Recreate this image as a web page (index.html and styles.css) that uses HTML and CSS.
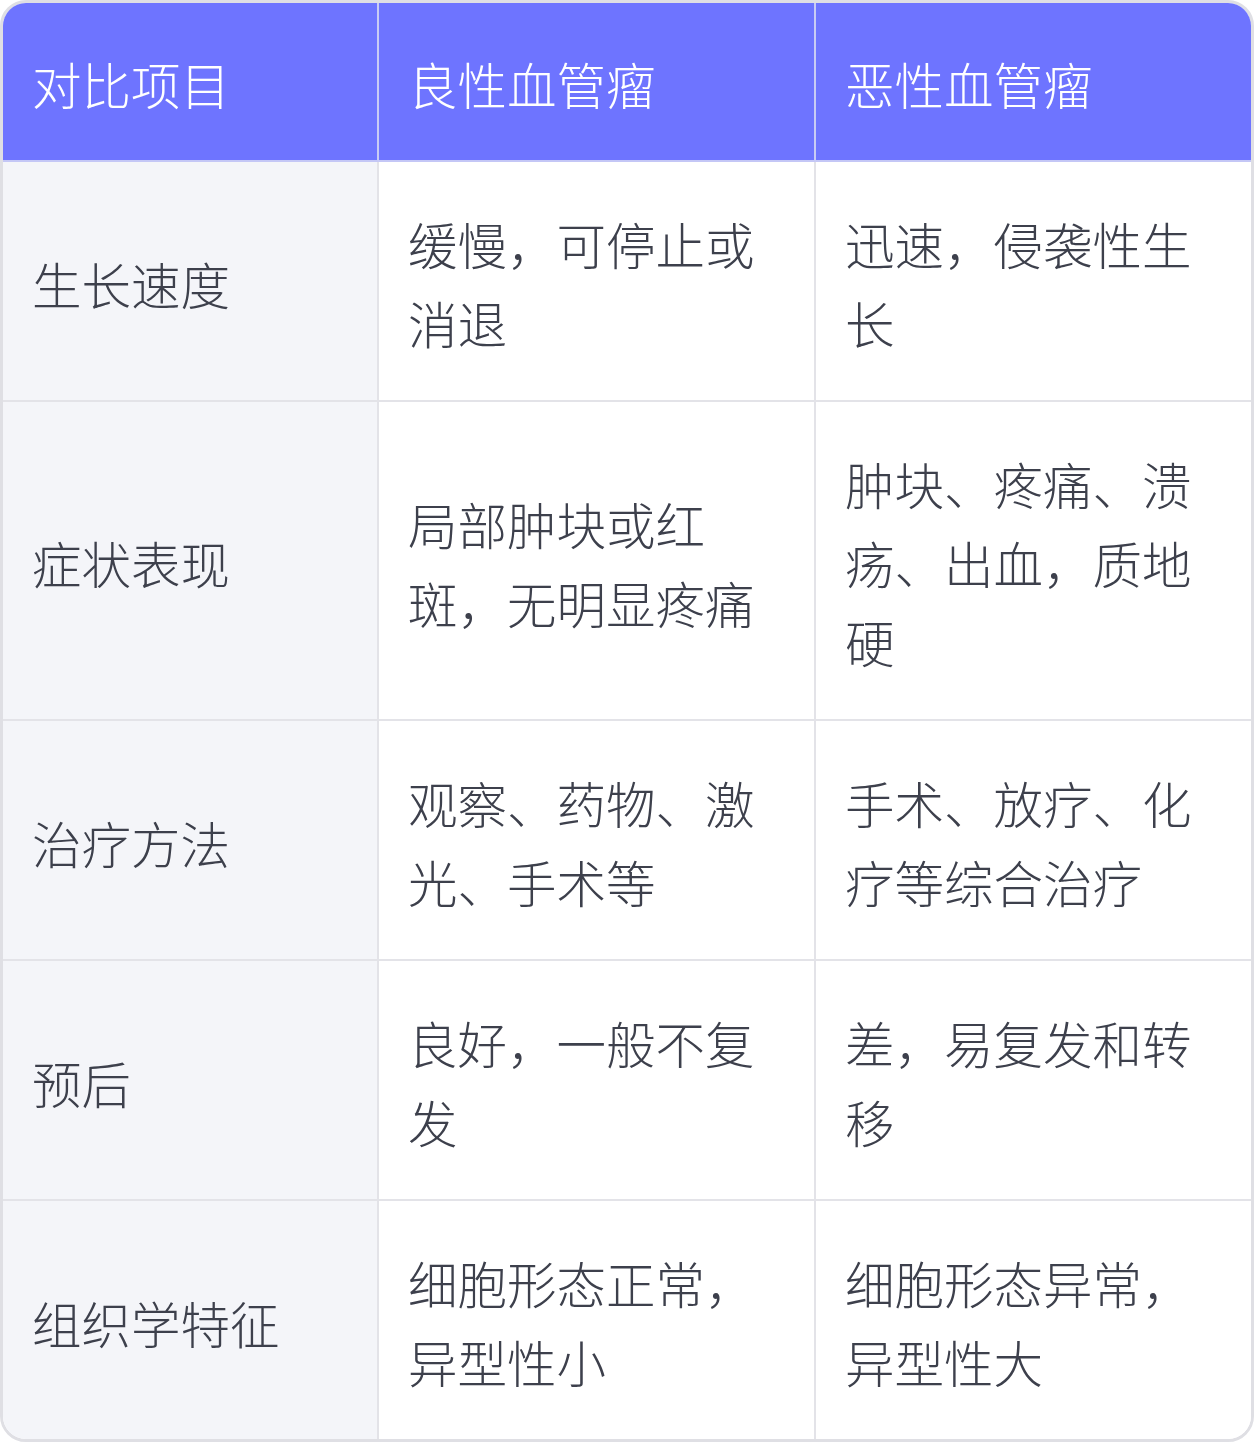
FILE: index.html
```html
<!DOCTYPE html>
<html lang="zh-CN">
<head>
<meta charset="utf-8">
<title>良性血管瘤与恶性血管瘤对比</title>
<link rel="stylesheet" href="styles.css">
</head>
<body>
<div class="card">
  <table class="cmp">
    <colgroup>
      <col class="c1">
      <col class="c2">
      <col class="c3">
    </colgroup>
    <thead>
      <tr>
        <th>对比项目</th>
        <th>良性血管瘤</th>
        <th>恶性血管瘤</th>
      </tr>
    </thead>
    <tbody>
      <tr>
        <td class="label">生长速度</td>
        <td>缓慢，可停止或消退</td>
        <td>迅速，侵袭性生长</td>
      </tr>
      <tr>
        <td class="label">症状表现</td>
        <td>局部肿块或红斑，无明显疼痛</td>
        <td>肿块、疼痛、溃疡、出血，质地硬</td>
      </tr>
      <tr>
        <td class="label">治疗方法</td>
        <td>观察、药物、激光、手术等</td>
        <td>手术、放疗、化疗等综合治疗</td>
      </tr>
      <tr>
        <td class="label">预后</td>
        <td>良好，一般不复发</td>
        <td>差，易复发和转移</td>
      </tr>
      <tr>
        <td class="label">组织学特征</td>
        <td>细胞形态正常，异型性小</td>
        <td>细胞形态异常，异型性大</td>
      </tr>
    </tbody>
  </table>
</div>
</body>
</html>
```

FILE: styles.css
```css
* { box-sizing: border-box; }

html, body {
  margin: 0;
  padding: 0;
  background: #ffffff;
}

.card {
  width: 1254px;
  border: 3px solid #dfdfe4;
  border-radius: 26px;
  overflow: hidden;
  background: #ffffff;
}

.cmp {
  width: 100%;
  table-layout: fixed;
  border-collapse: separate;
  border-spacing: 0;
  font-family: "Noto Sans CJK SC", "Noto Sans", sans-serif;
  font-size: 49.5px;
  line-height: 79px;
  font-weight: 300;
}

.c1 { width: 376px; }
.c2 { width: 437px; }
.c3 { width: 435px; }

.cmp th,
.cmp td {
  padding: 42px 28px 38px 29px;
  text-align: left;
  vertical-align: middle;
  border-right: 2px solid #e3e3e8;
  border-bottom: 2px solid #e3e3e8;
}

.cmp th {
  padding-top: 41px;
  padding-bottom: 37px;
}

.cmp th:last-child,
.cmp td:last-child {
  border-right: none;
}

.cmp tbody tr:last-child td {
  border-bottom: none;
}

.cmp th {
  background: #6e74ff;
  color: #ffffff;
  font-weight: 300;
  border-right-color: #c9cbf4;
  border-bottom-color: #c4c7f6;
}

.cmp td {
  color: #3d404c;
  background: #ffffff;
}

.cmp td.label {
  background: #f4f5f9;
}
```
